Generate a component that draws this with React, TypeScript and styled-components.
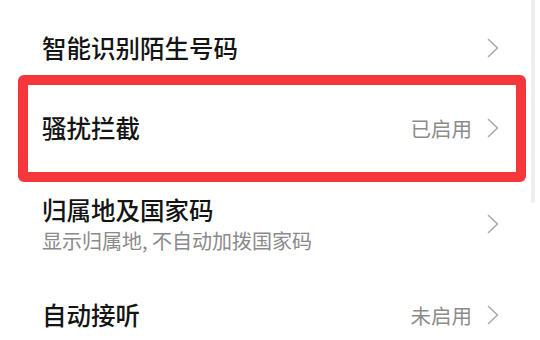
import React from "react";
import styled, { createGlobalStyle } from "styled-components";

const GlobalStyle = createGlobalStyle`
  html, body {
    margin: 0;
    padding: 0;
    background: #ffffff;
  }
  body {
    font-family: "Noto Sans CJK SC", "Noto Sans", sans-serif;
  }
`;

type Item = {
  title: string;
  subtitle?: string;
  value?: string;
  height: number;
  highlighted?: boolean;
};

const items: Item[] = [
  { title: "智能识别陌生号码", height: 80 },
  { title: "骚扰拦截", value: "已启用", height: 80, highlighted: true },
  { title: "归属地及国家码", subtitle: "显示归属地, 不自动加拨国家码", height: 112 },
  { title: "自动接听", value: "未启用", height: 70 },
];

const Chevron = () => (
  <ChevronSvg width="12" height="20" viewBox="0 0 12 20">
    <polyline points="1.5,1.5 10.5,10 1.5,18.5" fill="none" stroke="#ababab" strokeWidth="1.6" strokeLinecap="round" strokeLinejoin="round" />
  </ChevronSvg>
);

export default function App() {
  return (
    <>
      <GlobalStyle />
      <Screen>
        <List>
          {items.map((item) => (
            <Row key={item.title} $height={item.height}>
              <TextBlock>
                <Title>{item.title}</Title>
                {item.subtitle && <Subtitle>{item.subtitle}</Subtitle>}
              </TextBlock>
              <Trailing>
                {item.value && <Value>{item.value}</Value>}
                <Chevron />
              </Trailing>
              {item.highlighted && <Highlight />}
            </Row>
          ))}
        </List>
        <Scrollbar />
      </Screen>
    </>
  );
}

const Screen = styled.div`
  position: relative;
  width: 540px;
  height: 340px;
  overflow: hidden;
  background: #ffffff;
`;

const List = styled.div`
  display: flex;
  flex-direction: column;
  padding-top: 8px;
`;

const Row = styled.div<{ $height: number }>`
  position: relative;
  display: flex;
  align-items: center;
  justify-content: space-between;
  height: ${(p) => p.$height}px;
  padding: 0 41px 0 42px;
  box-sizing: border-box;
`;

const TextBlock = styled.div`
  display: flex;
  flex-direction: column;
  gap: 3px;
`;

const Title = styled.div`
  font-size: 24.5px;
  line-height: 30px;
  font-weight: 500;
  color: #141414;
`;

const Subtitle = styled.div`
  font-size: 20px;
  line-height: 26px;
  color: #8a8a8a;
`;

const Trailing = styled.div`
  display: flex;
  align-items: center;
  gap: 15px;
`;

const Value = styled.span`
  font-size: 20.5px;
  line-height: 26px;
  color: #8c8c8c;
`;

const ChevronSvg = styled.svg`
  display: block;
`;

const Highlight = styled.div`
  position: absolute;
  top: -13px;
  bottom: -14px;
  left: 18px;
  right: 14px;
  border: 10px solid #f5373b;
  border-radius: 6px;
  pointer-events: none;
`;

const Scrollbar = styled.div`
  position: absolute;
  top: 0;
  right: 5px;
  width: 4px;
  height: 203px;
  border-radius: 0 0 2px 2px;
  background: #eeeeee;
`;
